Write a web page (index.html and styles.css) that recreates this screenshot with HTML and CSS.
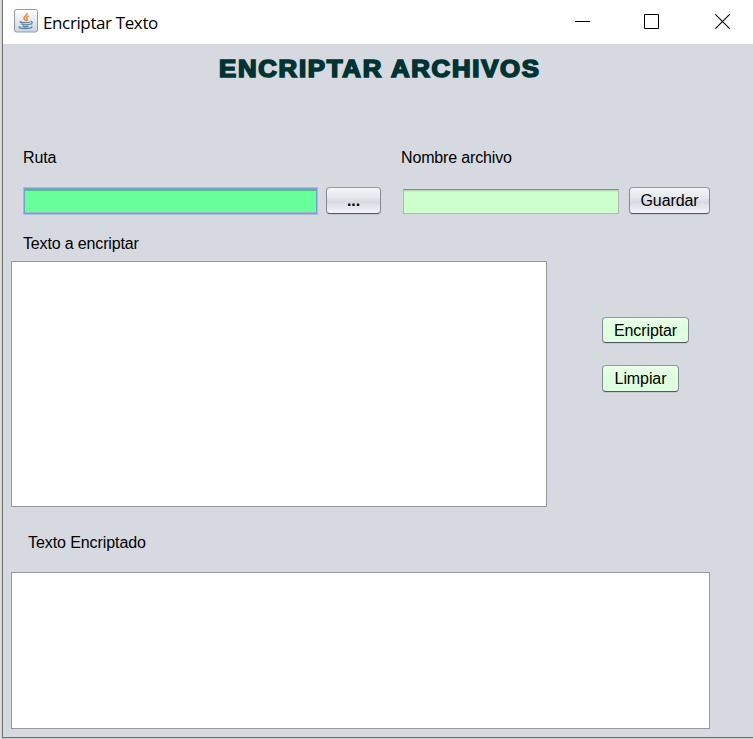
FILE: index.html
```html
<!DOCTYPE html>
<html lang="es">
<head>
<meta charset="utf-8">
<title>Encriptar Texto</title>
<link rel="stylesheet" href="styles.css">
</head>
<body>
<div class="window">
  <header class="titlebar">
    <svg class="app-icon" width="24" height="24" viewBox="0 0 24 24" fill="none">
      <defs>
        <linearGradient id="tile" x1="0" y1="0" x2="0" y2="1"><stop offset="0" stop-color="#fff"/><stop offset="1" stop-color="#ccd5df"/></linearGradient>
      </defs>
      <rect x=".5" y=".5" width="23" height="22.5" rx="2" fill="url(#tile)" stroke="#9099a2"/>
      <path d="M13 4c1 2-3 3.200-3 5 0 1.200 1.500 1.800 1.500 3M14.500 7c-2 1-2.500 2-1.500 3.200.5.700 0 1.300-.7 1.800" stroke="#e98b3e" stroke-width="1.600"/>
      <path d="M7.500 12.300c-3 1 0 1.400 3.500 1.300 2 0 4-.3 5-.6M7.500 14.800c1.500 1.500 6 1.300 8 .4M8.500 17c1.500.9 4.500.8 6 .2M16.500 12.500c2.500-.5 2.300 2.300-.5 3M6.500 17.500c-3.500 1 0 2 4.500 2s8-.8 6.500-2" stroke="#5b87a5" stroke-width="1.300"/>
    </svg>
    <span class="caption">Encriptar Texto</span>
    <div class="controls">
      <svg width="15" height="15" viewBox="0 0 15 15"><path d="M0 7.500h15" stroke="#000"/></svg>
      <svg width="15" height="15" viewBox="0 0 15 15"><path d="M.5.500h14v14H.5z" fill="none" stroke="#000"/></svg>
      <svg width="15" height="15" viewBox="0 0 15 15"><path d="M.3.300l14.400 14.400M14.700.300L.3 14.700" stroke="#000" stroke-width="1.100"/></svg>
    </div>
  </header>
  <main class="content">
    <h1 class="heading">ENCRIPTAR ARCHIVOS</h1>
    <div class="file-row">
      <section class="path-group">
        <label class="label">Ruta</label>
        <div class="controls-line">
          <div class="field field-focused"></div>
          <button class="btn btn-browse">...</button>
        </div>
      </section>
      <section class="name-group">
        <label class="label">Nombre archivo</label>
        <div class="controls-line">
          <div class="field field-name"></div>
          <button class="btn btn-save">Guardar</button>
        </div>
      </section>
    </div>
    <label class="label label-input">Texto a encriptar</label>
    <div class="editor-row">
      <div class="area area-input"></div>
      <div class="actions">
        <button class="btn btn-green btn-encrypt">Encriptar</button>
        <button class="btn btn-green btn-clear">Limpiar</button>
      </div>
    </div>
    <label class="label label-output">Texto Encriptado</label>
    <div class="area area-output"></div>
  </main>
</div>
</body>
</html>
```
FILE: styles.css
```css
* { box-sizing: border-box; }

body {
  margin: 0;
  height: 739px;
  padding: 0 0 1px 2px;
  overflow: hidden;
  background: linear-gradient(to right, #e4e2dd, #cfcdc8 2px, #c9c9cb 2px);
  font-family: "Liberation Sans", Arial, sans-serif;
  font-size: 16px;
  color: #000;
}

.window {
  height: 738px;
  border-left: 1px solid #707174;
  border-bottom: 1px solid #707174;
  background: #d6d9e0;
}

.titlebar {
  display: flex;
  align-items: center;
  height: 44px;
  padding: 0 23px 0 11px;
  background: #fff;
}

.app-icon { margin-top: -3px; }

.caption {
  margin: 1px 0 0 5px;
  font: 17px/24px "Open Sans", "Noto Sans", sans-serif;
  letter-spacing: -0.38px;
  white-space: nowrap;
}

.controls {
  display: flex;
  gap: 54px;
  margin-left: auto;
}

.controls svg { display: block; margin-top: -1px; }
.controls svg:last-child { margin-left: 2px; }

.content { padding-left: 8px; }

.heading {
  margin: 0 0 0 208px;
  padding-top: 10px;
  height: 104px;
  width: 300px;
  font: bold 23px/30px "Liberation Sans", Arial, sans-serif;
  letter-spacing: 1.55px;
  color: #003333;
  -webkit-text-stroke: 1.6px #003333;
  transform: scaleX(1.12);
  transform-origin: 0 0;
  white-space: nowrap;
}

.file-row { display: flex; padding-left: 12px; height: 86px; }
.path-group { width: 378px; }

.label {
  display: block;
  line-height: 20px;
  letter-spacing: -0.15px;
  white-space: nowrap;
}

.controls-line {
  display: flex;
  align-items: flex-start;
  margin-top: 19px;
}

.field-focused {
  width: 295px;
  height: 28px;
  border: 1px solid #a3bddb;
  background: #66ff99;
  box-shadow: inset 0 0 0 1px #73a4d1, inset 0 3px 0 #55bd80, inset 0 -2px 0 #9fb5c7;
}

.field-name {
  width: 216px;
  height: 25px;
  margin: 2px 0 0 2px;
  border: 1px solid #b0b9b2;
  border-top-color: #858b89;
  background: #ccffcc;
  box-shadow: inset 0 1px 0 #addaaf, inset 0 2px 0 #c1f2c2;
}

.btn {
  padding: 0;
  height: 27px;
  border: 1px solid #858890;
  border-top-color: #95989f;
  border-bottom-color: #555961;
  border-radius: 4px;
  background: linear-gradient(#f4f5f7, #e4e7eb 40%, #d7dae1 55%, #f2f4f8);
  box-shadow: 0 1px 0 #c3c6cd;
  font: 16px/24px "Liberation Sans", Arial, sans-serif;
  letter-spacing: -0.1px;
  color: #000;
}

.btn-browse { width: 55px; margin-left: 8px; font-weight: bold; }
.btn-save { width: 81px; margin-left: 10px; }
.btn-green { background: linear-gradient(#e9ffe9, #ddffdd 50%, #e2ffe3); }
.btn-encrypt { width: 87px; height: 26px; padding-top: 1px; }
.btn-clear { width: 77px; }

.label-input { margin-left: 12px; height: 27px; }

.area { background: #fff; border: 1px solid #9297a1; }
.area-input { width: 536px; height: 246px; }
.area-output { width: 699px; height: 157px; }

.editor-row { display: flex; }

.actions {
  display: flex;
  flex-direction: column;
  gap: 22px;
  margin: 56px 0 0 55px;
}

.label-output { margin: 26px 0 19px 17px; letter-spacing: -0.08px; }
```
